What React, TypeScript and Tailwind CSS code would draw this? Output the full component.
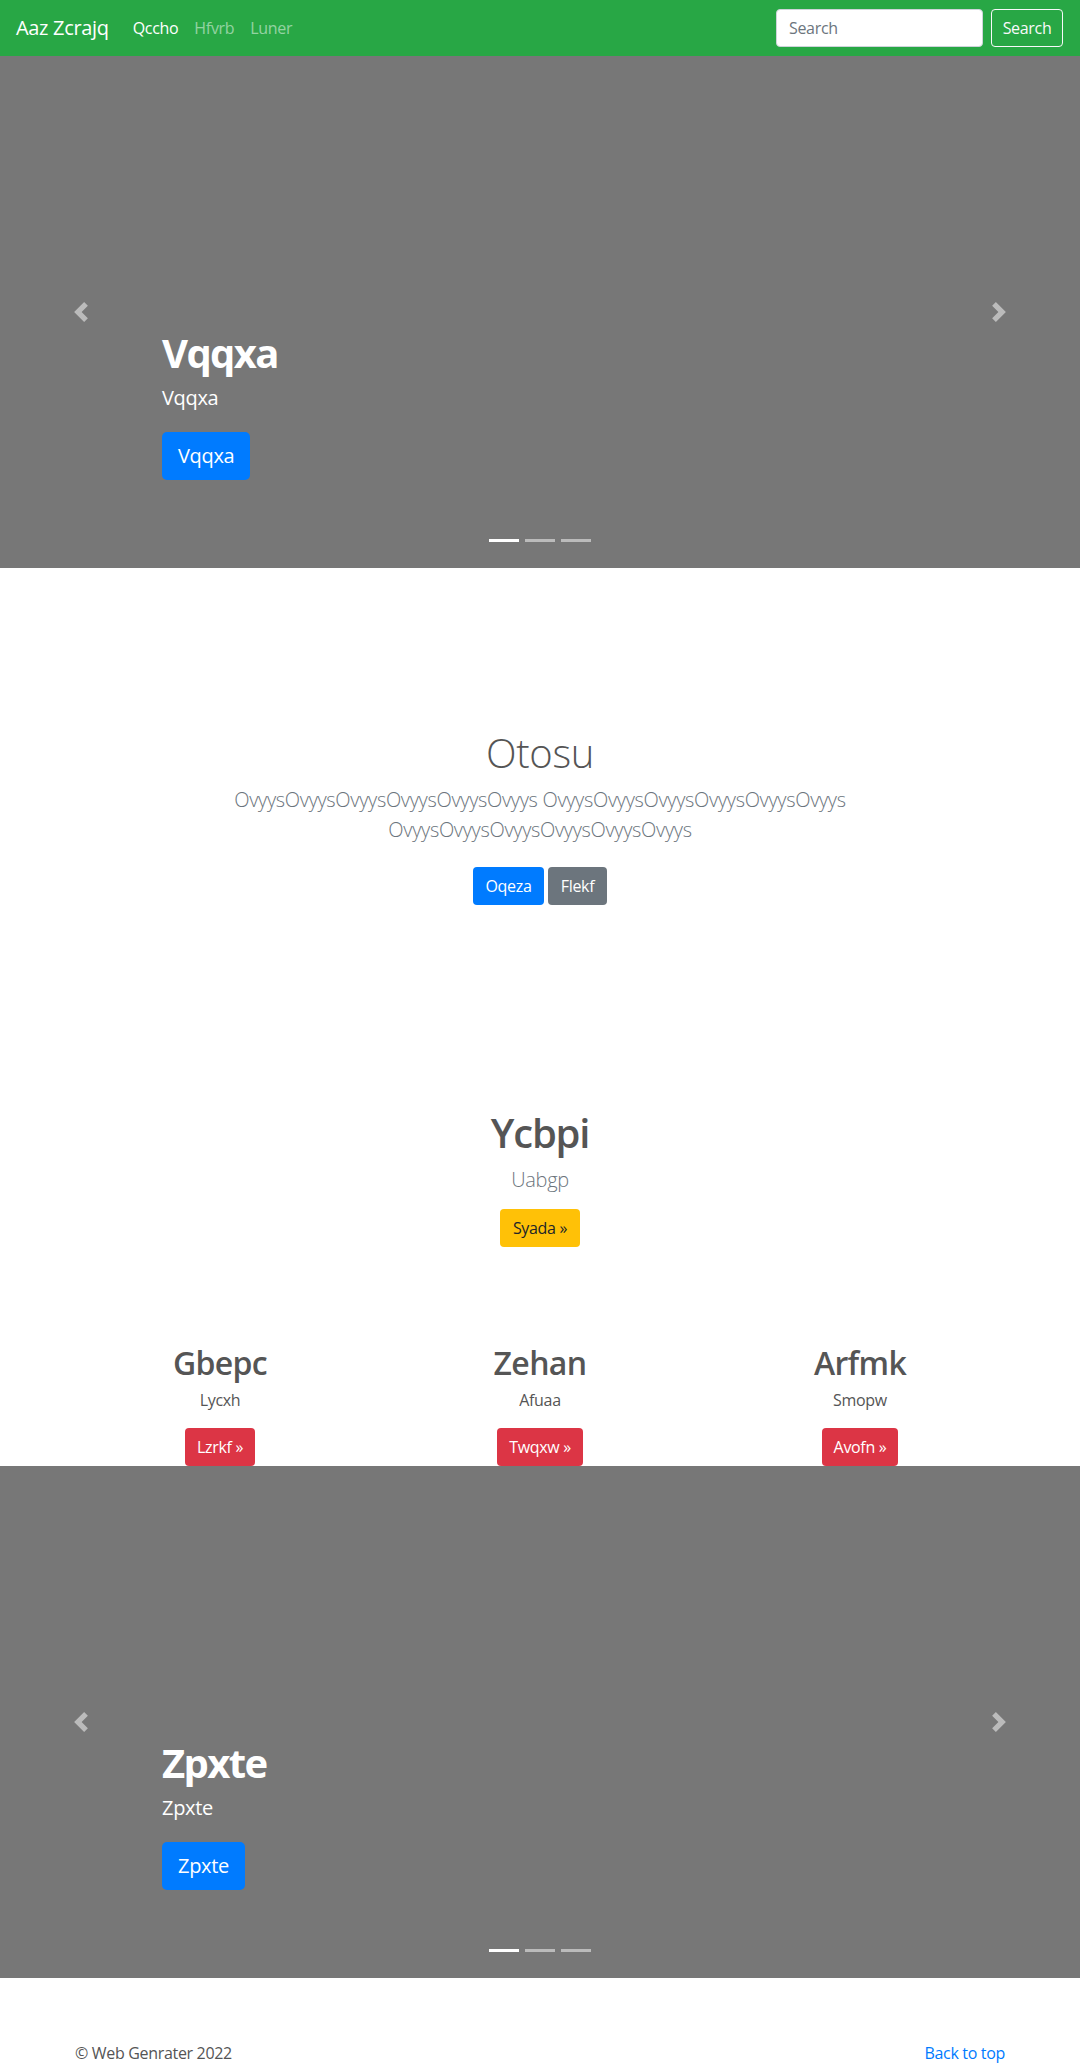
const font = { fontFamily: '"Open Sans", "Noto Sans", Arial, sans-serif' };

const Chevron = ({ dir }: { dir: "prev" | "next" }) => (
  <svg width="20" height="20" viewBox="0 0 8 8" fill="#fff">
    {dir === "prev" ? (
      <path d="M5.25 0l-4 4 4 4 1.5-1.5L4.25 4l2.5-2.5L5.25 0z" />
    ) : (
      <path d="M2.75 0l-1.5 1.5L3.75 4l-2.5 2.5L2.75 8l4-4-4-4z" />
    )}
  </svg>
);

const Carousel = ({ title }: { title: string }) => (
  <div className="relative h-[512px] bg-[#777777] text-white">
    <div className="flex h-full flex-col justify-end pl-[162px] pb-[88px]">
      <h1 className="text-[40px] font-bold leading-[48px] tracking-[-0.04em] mb-[6px]">{title}</h1>
      <p className="text-[20px] font-medium leading-[30px] mb-[19px]">{title}</p>
      <div>
        <button className="h-12 rounded-[5px] bg-[#007bff] px-4 text-[20px] text-white">
          {title}
        </button>
      </div>
    </div>

    {/* controls */}
    <div className="absolute left-0 top-0 flex h-full w-[162px] items-center justify-center opacity-50">
      <Chevron dir="prev" />
    </div>
    <div className="absolute right-0 top-0 flex h-full w-[162px] items-center justify-center opacity-50">
      <Chevron dir="next" />
    </div>

    {/* indicators */}
    <div className="absolute bottom-[26px] left-0 right-0 flex justify-center gap-[6px]">
      <span className="h-[3px] w-[30px] bg-white" />
      <span className="h-[3px] w-[30px] bg-white/50" />
      <span className="h-[3px] w-[30px] bg-white/50" />
    </div>
  </div>
);

const Feature = ({ title, text, cta }: { title: string; text: string; cta: string }) => (
  <div className="flex flex-col items-center">
    <h2 className="text-[32px] font-semibold leading-[38px] tracking-[-0.02em] text-[#555555] mb-[6px]">
      {title}
    </h2>
    <p className="text-base leading-6 text-[#555555] mb-4">{text}</p>
    <button className="h-[38px] rounded bg-[#dc3545] px-3 text-base text-white">{cta} »</button>
  </div>
);

export default function App() {
  return (
    <div className="min-h-screen bg-white tracking-[-0.02em]" style={font}>
      {/* Navbar */}
      <nav className="flex h-14 items-center bg-[#28a745] pl-4 pr-[17px]">
        <span className="mr-4 text-[20px] text-white">Aaz Zcrajq</span>
        <div className="flex text-base">
          <a className="px-2 text-white">Qccho</a>
          <a className="px-2 text-white/50">Hfvrb</a>
          <a className="px-2 text-white/50">Luner</a>
        </div>
        <div className="ml-auto flex items-center gap-2">
          <input
            placeholder="Search"
            className="h-[38px] w-[207px] rounded border border-[#ced4da] bg-white px-3 text-base text-[#495057] placeholder:text-[#6c757d]"
          />
          <button className="h-[38px] w-[72px] rounded border border-[#f8f9fa] text-base text-[#f8f9fa]">
            Search
          </button>
        </div>
      </nav>

      <Carousel title="Vqqxa" />

      {/* Jumbotron */}
      <section className="flex flex-col items-center pt-[161px] text-center">
        <h1 className="text-[40px] font-light leading-[48px] text-[#555555] mb-2">Otosu</h1>
        <p className="text-[20px] font-light leading-[30px] text-[#6c757d]">
          <span className="block whitespace-nowrap">
            OvyysOvyysOvyysOvyysOvyysOvyys OvyysOvyysOvyysOvyysOvyysOvyys
          </span>
          <span className="block whitespace-nowrap">OvyysOvyysOvyysOvyysOvyysOvyys</span>
        </p>
        <div className="mt-[22px] flex gap-1">
          <button className="h-[38px] w-[71px] rounded bg-[#007bff] text-base text-white">Oqeza</button>
          <button className="h-[38px] w-[59px] rounded bg-[#6c757d] text-base text-white">Flekf</button>
        </div>
      </section>

      {/* Marketing */}
      <section className="flex flex-col items-center pt-[204px] text-center">
        <h2 className="text-[40px] font-semibold leading-[48px] tracking-[-0.03em] text-[#555555] mb-2">
          Ycbpi
        </h2>
        <p className="text-[20px] font-light leading-[30px] text-[#6c757d]">Uabgp</p>
        <button className="mt-[14px] h-[38px] w-20 rounded bg-[#ffc107] text-base text-[#212529]">
          Syada »
        </button>
      </section>

      <section className="mx-auto grid w-[960px] grid-cols-3 pt-[97px]">
        <Feature title="Gbepc" text="Lycxh" cta="Lzrkf" />
        <Feature title="Zehan" text="Afuaa" cta="Twqxw" />
        <Feature title="Arfmk" text="Smopw" cta="Avofn" />
      </section>

      <Carousel title="Zpxte" />

      {/* Footer */}
      <footer className="mx-auto flex w-[930px] justify-between pt-[63px] text-base leading-6">
        <p className="text-[#555555]">© Web Genrater 2022</p>
        <a className="text-[#007bff]">Back to top</a>
      </footer>
    </div>
  );
}
